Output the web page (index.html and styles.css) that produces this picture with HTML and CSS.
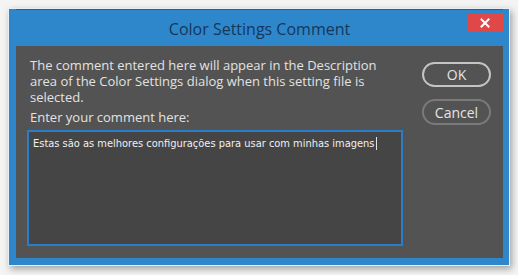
FILE: index.html
```html
<!DOCTYPE html>
<html>
<head>
<meta charset="utf-8">
<link rel="stylesheet" href="styles.css">
</head>
<body>
<div class="window">
  <div class="titlebar">
    <span class="title">Color Settings Comment</span>
    <div class="close">
      <svg width="10" height="10" viewBox="0 0 10 10"><path d="M1.5 1.5 L8.5 8.5 M8.5 1.5 L1.5 8.5" stroke="#fff" stroke-width="2" stroke-linecap="square"/></svg>
    </div>
  </div>
  <div class="content">
    <div class="main">
      <p class="desc">The comment entered here will appear in the Description area of the Color Settings dialog when this setting file is selected.</p>
      <p class="label">Enter your comment here:</p>
      <div class="field">Estas são as melhores configurações para usar com minhas imagens<span class="caret"></span></div>
    </div>
    <div class="buttons">
      <div class="btn ok">OK</div>
      <div class="btn cancel">Cancel</div>
    </div>
  </div>
</div>
</body>
</html>
```
FILE: styles.css
```css
html, body {
  margin: 0;
  padding: 0;
}
body {
  width: 518px;
  height: 275px;
  background: #f4f4f4;
  overflow: hidden;
}
.window {
  margin: 8px 0 0 8px;
  width: 502px;
  height: 258px;
  box-sizing: border-box;
  border: 1px solid #e9eef2;
  background: #2f87cb;
  padding: 0 6px 8px 7px;
  display: flex;
  flex-direction: column;
  box-shadow: 2px 3px 7px rgba(0, 0, 0, 0.35);
}
.titlebar {
  height: 37px;
  flex: none;
  display: flex;
  align-items: center;
  justify-content: center;
  position: relative;
  border-top: 1px solid #2a5f88;
  box-sizing: border-box;
}
.title {
  font-family: "Open Sans", sans-serif;
  font-size: 16px;
  color: #15375a;
  margin-top: 1px;
}
.close {
  position: absolute;
  right: 0;
  top: 3px;
  width: 36px;
  height: 19px;
  background: #e04848;
  display: flex;
  align-items: center;
  justify-content: center;
}
.close svg {
  display: block;
}
.content {
  flex: 1;
  background: #535353;
  display: flex;
  padding: 11px 12px 12px 11px;
  gap: 19px;
}
.main {
  width: 376px;
  display: flex;
  flex-direction: column;
}
.desc, .label {
  margin: 0;
  padding-left: 3px;
  font-family: "Open Sans", sans-serif;
  font-size: 13px;
  line-height: 16px;
  color: #e2e2e2;
}
.label {
  margin-top: 4px;
}
.field {
  margin-top: 5px;
  height: 116px;
  box-sizing: border-box;
  border: 2px solid #2a7dc8;
  background: #454545;
  padding: 5px 4px;
  font-family: "DejaVu Sans", sans-serif;
  font-size: 9.9px;
  color: #f0f0f0;
  white-space: nowrap;
  line-height: 12px;
}
.caret {
  display: inline-block;
  width: 1px;
  height: 13px;
  background: #e0e0e0;
  vertical-align: -3px;
  margin-left: 1px;
}
.buttons {
  display: flex;
  flex-direction: column;
  gap: 12px;
  padding-top: 5px;
}
.btn {
  width: 69px;
  height: 25px;
  box-sizing: border-box;
  border-radius: 13px;
  display: flex;
  align-items: center;
  justify-content: center;
  font-family: "Open Sans", sans-serif;
  font-size: 14px;
  color: #e4e4e4;
}
.ok {
  border: 2px solid #c4c4c4;
}
.cancel {
  border: 2px solid #7a7a7a;
  height: 26px;
}
```
